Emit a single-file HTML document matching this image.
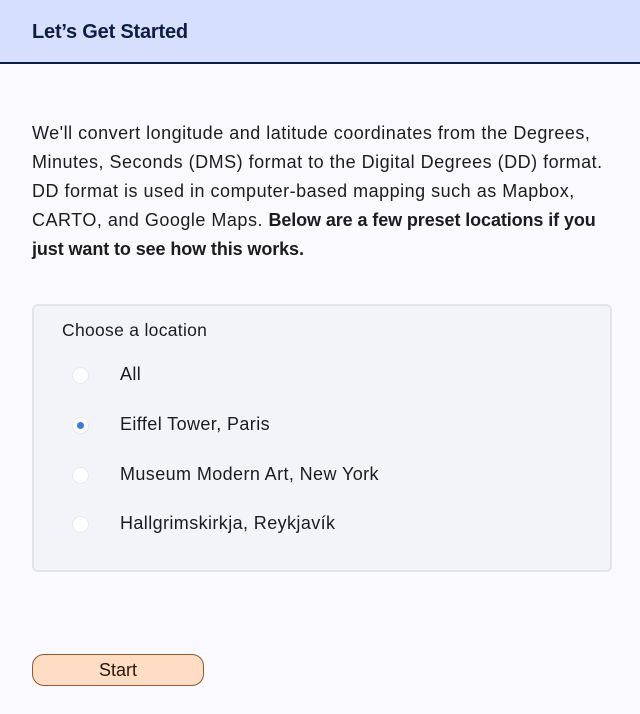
<!DOCTYPE html>
<html><head><meta charset="utf-8"><style>
*{box-sizing:border-box;margin:0;padding:0}
body{width:640px;height:714px;background:#f9f9ff;font-family:"Liberation Sans",sans-serif;color:#1b1b21;overflow:hidden;position:relative}
.hdr{position:absolute;left:0;top:0;width:640px;height:64px;background:#d6e0fe;border-bottom:2px solid #0e1c46}
.hdr h1{position:absolute;left:32px;top:21px;font-size:20px;font-weight:bold;color:#0e1c46;letter-spacing:-0.2px}
p{position:absolute;left:32px;top:119px;width:600px;font-size:18px;line-height:29px;letter-spacing:0.5px;white-space:nowrap}
p b{letter-spacing:-0.1px}
.box{position:absolute;left:32px;top:304px;width:580px;height:268px;background:#f2f4f9;border:2px solid #e3e5ea;border-radius:6px}
.lg{position:absolute;left:28px;top:14px;font-size:17.5px;letter-spacing:0.3px}
.opt{position:absolute;left:0;font-size:18px;letter-spacing:0.4px}
.opt .r{position:absolute;left:38px;top:4px;width:17px;height:17px;border-radius:50%;background:#fff;border:1px solid #e8e9ee}
.opt .r.on::after{content:"";position:absolute;left:4px;top:4px;width:7px;height:7px;border-radius:50%;background:#3a7bdc}
.opt span{position:absolute;left:86px;top:1px;white-space:nowrap}
.btn{position:absolute;left:32px;top:654px;width:172px;height:32px;border-radius:12px;background:#ffdcc4;border:1px solid #8e5a2a;font-size:18px;text-align:center;line-height:30px;color:#2b1608}
</style></head><body>
<div class="hdr"><h1>Let’s Get Started</h1></div>
<p>We'll convert longitude and latitude coordinates from the Degrees,<br>Minutes, Seconds (DMS) format to the Digital Degrees (DD) format.<br>DD format is used in computer-based mapping such as Mapbox,<br>CARTO, and Google Maps. <b>Below are a few preset locations if you<br>just want to see how this works.</b></p>
<div class="box">
<div class="lg">Choose a location</div>
<div class="opt" style="top:57px"><div class="r"></div><span>All</span></div>
<div class="opt" style="top:107px"><div class="r on"></div><span>Eiffel Tower, Paris</span></div>
<div class="opt" style="top:157px"><div class="r"></div><span>Museum Modern Art, New York</span></div>
<div class="opt" style="top:206px"><div class="r"></div><span>Hallgrimskirkja, Reykjavík</span></div>
</div>
<div class="btn">Start</div>
</body></html>
